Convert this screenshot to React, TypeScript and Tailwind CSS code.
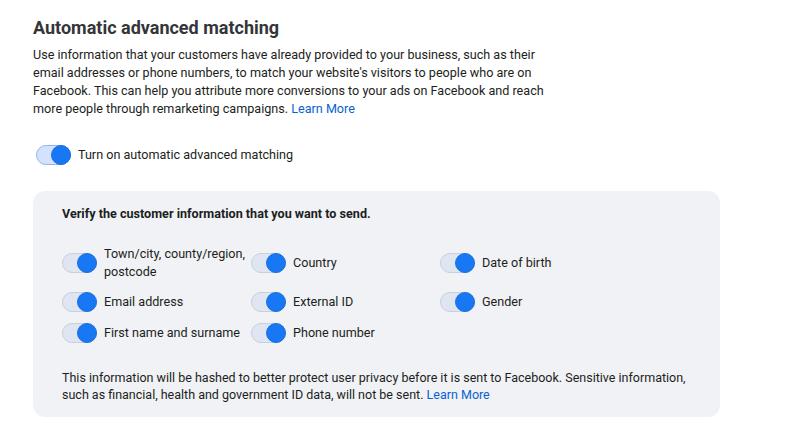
import clsx from 'clsx'

type ToggleProps = {
  primary?: boolean
}

function Toggle({ primary }: ToggleProps) {
  return (
    <span
      className={clsx(
        'relative inline-flex h-[20px] w-[35px] shrink-0 items-center rounded-full border',
        primary ? 'border-[#8db6f5] bg-[#d3e3fc]' : 'border-[#c7d0dc] bg-[#dfe6f1]',
      )}
    >
      <span className="absolute right-[-1px] top-[-1px] h-[20px] w-[20px] rounded-full border border-[#1a6fe0] bg-[#1877f2]" />
    </span>
  )
}

const fields = [
  'Town/city, county/region, postcode',
  'Country',
  'Date of birth',
  'Email address',
  'External ID',
  'Gender',
  'First name and surname',
  'Phone number',
]

export default function App() {
  return (
    <div className="min-h-[438px] bg-white px-[33px] pt-[16px] font-['Roboto','Liberation_Sans',sans-serif] text-[#1c1e21]">
      <h1 className="text-[18px] font-bold leading-[24px] text-[#333538]">Automatic advanced matching</h1>
      <p className="mt-[6px] max-w-[515px] text-[12.6px] leading-[18px]">
        Use information that your customers have already provided to your business, such as their email addresses
        or phone numbers, to match your website&apos;s visitors to people who are on Facebook. This can help you
        attribute more conversions to your ads on Facebook and reach more people through remarketing campaigns.{' '}
        <a className="text-[#0a62d0]">Learn More</a>
      </p>

      <div className="mt-[27px] flex items-center gap-[7px] pl-[3px]">
        <Toggle primary />
        <span className="text-[12.6px] leading-[18px]">Turn on automatic advanced matching</span>
      </div>

      <div className="mt-[26px] w-[687px] rounded-[12px] bg-[#f0f2f5] pb-[14px] pl-[29px] pr-[20px] pt-[14px]">
        <div className="text-[12.6px] font-bold leading-[18px]">Verify the customer information that you want to send.</div>

        <div className="mt-[22px] grid grid-cols-[189px_189px_189px] gap-y-[11px]">
          {fields.map((field) => (
            <div key={field} className="flex items-center gap-[7px]">
              <Toggle />
              <span className="max-w-[148px] text-[12.6px] leading-[18px]">{field}</span>
            </div>
          ))}
        </div>

        <p className="mt-[26px] text-[12.5px] leading-[17px]">
          This information will be hashed to better protect user privacy before it is sent to Facebook. Sensitive
          information, such as financial, health and government ID data, will not be sent.{' '}
          <a className="text-[#0a62d0]">Learn More</a>
        </p>
      </div>
    </div>
  )
}
